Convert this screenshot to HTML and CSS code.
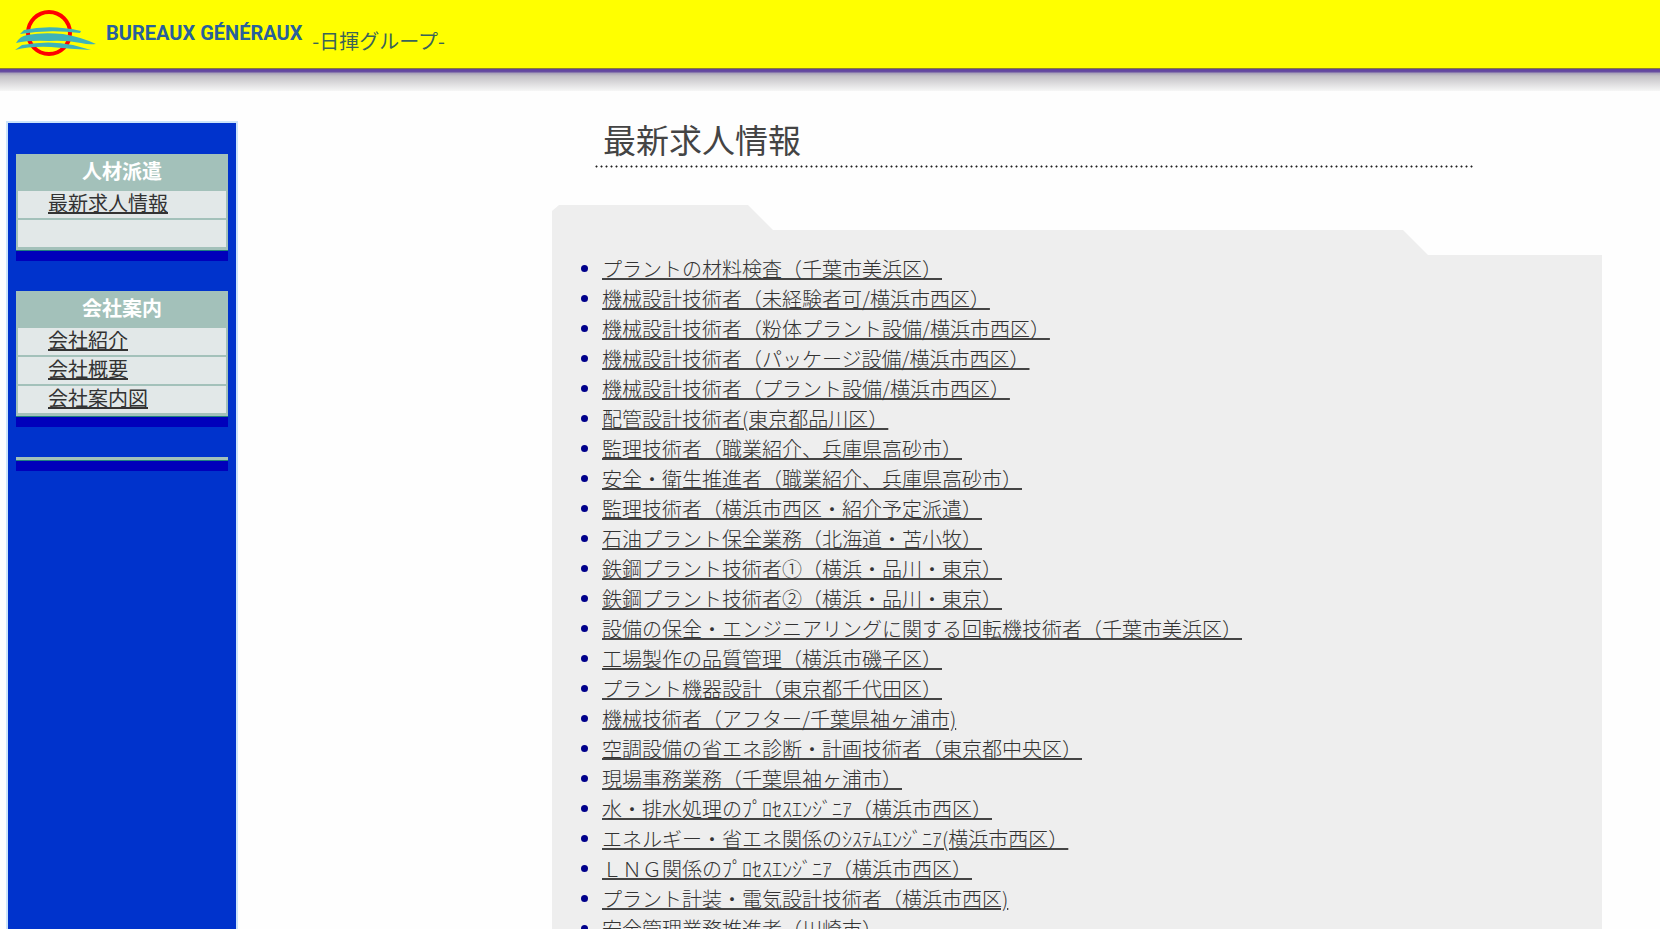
FILE: index.html
```html
<!DOCTYPE html>
<html lang="ja">
<head>
    <meta charset="UTF-8">
    <meta name="viewport" content="width=device-width, initial-scale=1.0">
    <title>最新求人情報</title>
    <link rel="stylesheet" href="styles.css">
</head>
<body>
    <header class="header">
        <svg class="logo" width="84" height="50" viewBox="0 0 84 50" aria-hidden="true">
            <ellipse cx="34" cy="25" rx="21" ry="21" fill="none" stroke="#ff0000" stroke-width="4"/>
            <path d="M5 26 L9 22 Q36 16 66 23 L65 25 Q34 21 5 26Z" fill="#3fb3b8"/>
            <path d="M1 35 Q5 28 12 27 Q28 24 48 26 Q66 29 81 36 Q74 37 66 35 Q50 32 34 33 Q14 32 1 35Z" fill="#3fb3b8"/>
            <path d="M0 42 L7 37 Q34 32 58 37 L76 42 Q56 41 36 39 Q16 38 0 42Z" fill="#3fb3b8"/>
        </svg>
        <span class="brand">BUREAUX GÉNÉRAUX</span>
        <span class="group">-日揮グループ-</span>
    </header>

    <div class="page">
        <nav class="sidebar">
            <section class="menu">
                <h2>人材派遣</h2>
                <ul>
                    <li><a href="#">最新求人情報</a></li>
                    <li></li>
                </ul>
            </section>
            <section class="menu">
                <h2>会社案内</h2>
                <ul>
                    <li><a href="#">会社紹介</a></li>
                    <li><a href="#">会社概要</a></li>
                    <li><a href="#">会社案内図</a></li>
                </ul>
            </section>
            <div class="menu"></div>
        </nav>

        <main class="content">
            <h1>最新求人情報</h1>
            <div class="folder">
                <ul class="jobs">
                    <li><a href="#">プラントの材料検査（千葉市美浜区）</a></li>
                    <li><a href="#">機械設計技術者（未経験者可/横浜市西区）</a></li>
                    <li><a href="#">機械設計技術者（粉体プラント設備/横浜市西区）</a></li>
                    <li><a href="#">機械設計技術者（パッケージ設備/横浜市西区）</a></li>
                    <li><a href="#">機械設計技術者（プラント設備/横浜市西区）</a></li>
                    <li><a href="#">配管設計技術者(東京都品川区）</a></li>
                    <li><a href="#">監理技術者（職業紹介、兵庫県高砂市）</a></li>
                    <li><a href="#">安全・衛生推進者（職業紹介、兵庫県高砂市）</a></li>
                    <li><a href="#">監理技術者（横浜市西区・紹介予定派遣）</a></li>
                    <li><a href="#">石油プラント保全業務（北海道・苫小牧）</a></li>
                    <li><a href="#">鉄鋼プラント技術者①（横浜・品川・東京）</a></li>
                    <li><a href="#">鉄鋼プラント技術者②（横浜・品川・東京）</a></li>
                    <li><a href="#">設備の保全・エンジニアリングに関する回転機技術者（千葉市美浜区）</a></li>
                    <li><a href="#">工場製作の品質管理（横浜市磯子区）</a></li>
                    <li><a href="#">プラント機器設計（東京都千代田区）</a></li>
                    <li><a href="#">機械技術者（アフター/千葉県袖ヶ浦市)</a></li>
                    <li><a href="#">空調設備の省エネ診断・計画技術者（東京都中央区）</a></li>
                    <li><a href="#">現場事務業務（千葉県袖ヶ浦市）</a></li>
                    <li><a href="#">水・排水処理のﾌﾟﾛｾｽｴﾝｼﾞﾆｱ（横浜市西区）</a></li>
                    <li><a href="#">エネルギー・省エネ関係のｼｽﾃﾑｴﾝｼﾞﾆｱ(横浜市西区）</a></li>
                    <li><a href="#">ＬＮＧ関係のﾌﾟﾛｾｽｴﾝｼﾞﾆｱ（横浜市西区）</a></li>
                    <li><a href="#">プラント計装・電気設計技術者（横浜市西区)</a></li>
                    <li><a href="#">安全管理業務推進者（川崎市）</a></li>
                </ul>
            </div>
        </main>
    </div>
</body>
</html>
```
FILE: styles.css
```css
* {
    margin: 0;
    padding: 0;
    box-sizing: border-box;
}

body {
    background-color: #fefefe;
    font-family: "Noto Sans CJK JP", sans-serif;
    font-size: 20px;
    color: #444;
}

ul {
    list-style: none;
}

/* header */
.header {
    display: flex;
    align-items: flex-start;
    height: 91px;
    padding: 8px 15px 0;
    background: linear-gradient(#ffff00 68px, #8c8030 68px, #8c8030 69px, #6040a0 69px, #6850a0 72px, #a8a0b8 73px, #c4c2c6 76px, #f6f6f6 91px);
}

.brand {
    margin-left: 7px;
    font-family: Roboto, "Liberation Sans", sans-serif;
    font-size: 20px;
    font-weight: bold;
    line-height: 50px;
    color: #28609c;
    white-space: nowrap;
}

.group {
    margin-left: 10px;
    padding-top: 19px;
    font-size: 20px;
    line-height: 28px;
    color: #3a6458;
    white-space: nowrap;
}

.page {
    display: flex;
    align-items: stretch;
}

/* left menu */
.sidebar {
    flex: none;
    width: 232px;
    margin: 30px 0 0 6px;
    padding: 31px 8px 0;
    background-color: #0033cc;
    border: 2px solid #cce4fa;
}

.menu {
    margin-bottom: 30px;
    padding-top: 3px;
    background-color: #a3c1ba;
    border-bottom: 10px solid #0000bb;
    box-shadow: inset 0 -1px #208080;
}

.menu h2 {
    height: 34px;
    font-size: 20px;
    line-height: 28px;
    text-align: center;
    color: #fff;
}

.menu ul {
    padding: 0 2px 4px;
}

.menu li {
    height: 27px;
    padding-left: 30px;
    line-height: 24px;
    background-color: #e2e8e8;
}

.menu li + li {
    margin-top: 2px;
}

.menu a {
    color: #333;
}

.menu:last-child {
    padding-top: 4px;
}

/* job list */
.content {
    flex: 1;
    margin: 30px 58px 0 314px;
}

.content h1 {
    height: 47px;
    margin: 0 128px 37px 42px;
    padding-left: 9px;
    font-size: 33px;
    font-weight: normal;
    line-height: 36px;
    background: radial-gradient(circle, #222 0, #222 20%, transparent 50%) left bottom / 5px 3px repeat-x;
}

.folder {
    padding: 49px 20px 40px 50px;
    background-color: #eee;
    clip-path: polygon(0 6px, 7px 0, 196px 0, 221px 25px, calc(100% - 199px) 25px, calc(100% - 174px) 50px, 100% 50px, 100% 100%, 0 100%);
}

.jobs li {
    position: relative;
    height: 30px;
    line-height: 30px;
    font-weight: 300;
}

.jobs li::before {
    content: "";
    position: absolute;
    left: -21px;
    top: 11px;
    width: 7px;
    height: 7px;
    border-radius: 50%;
    background-color: #00008b;
}

.jobs a {
    color: #333;
    text-decoration-color: #444;
}
```
